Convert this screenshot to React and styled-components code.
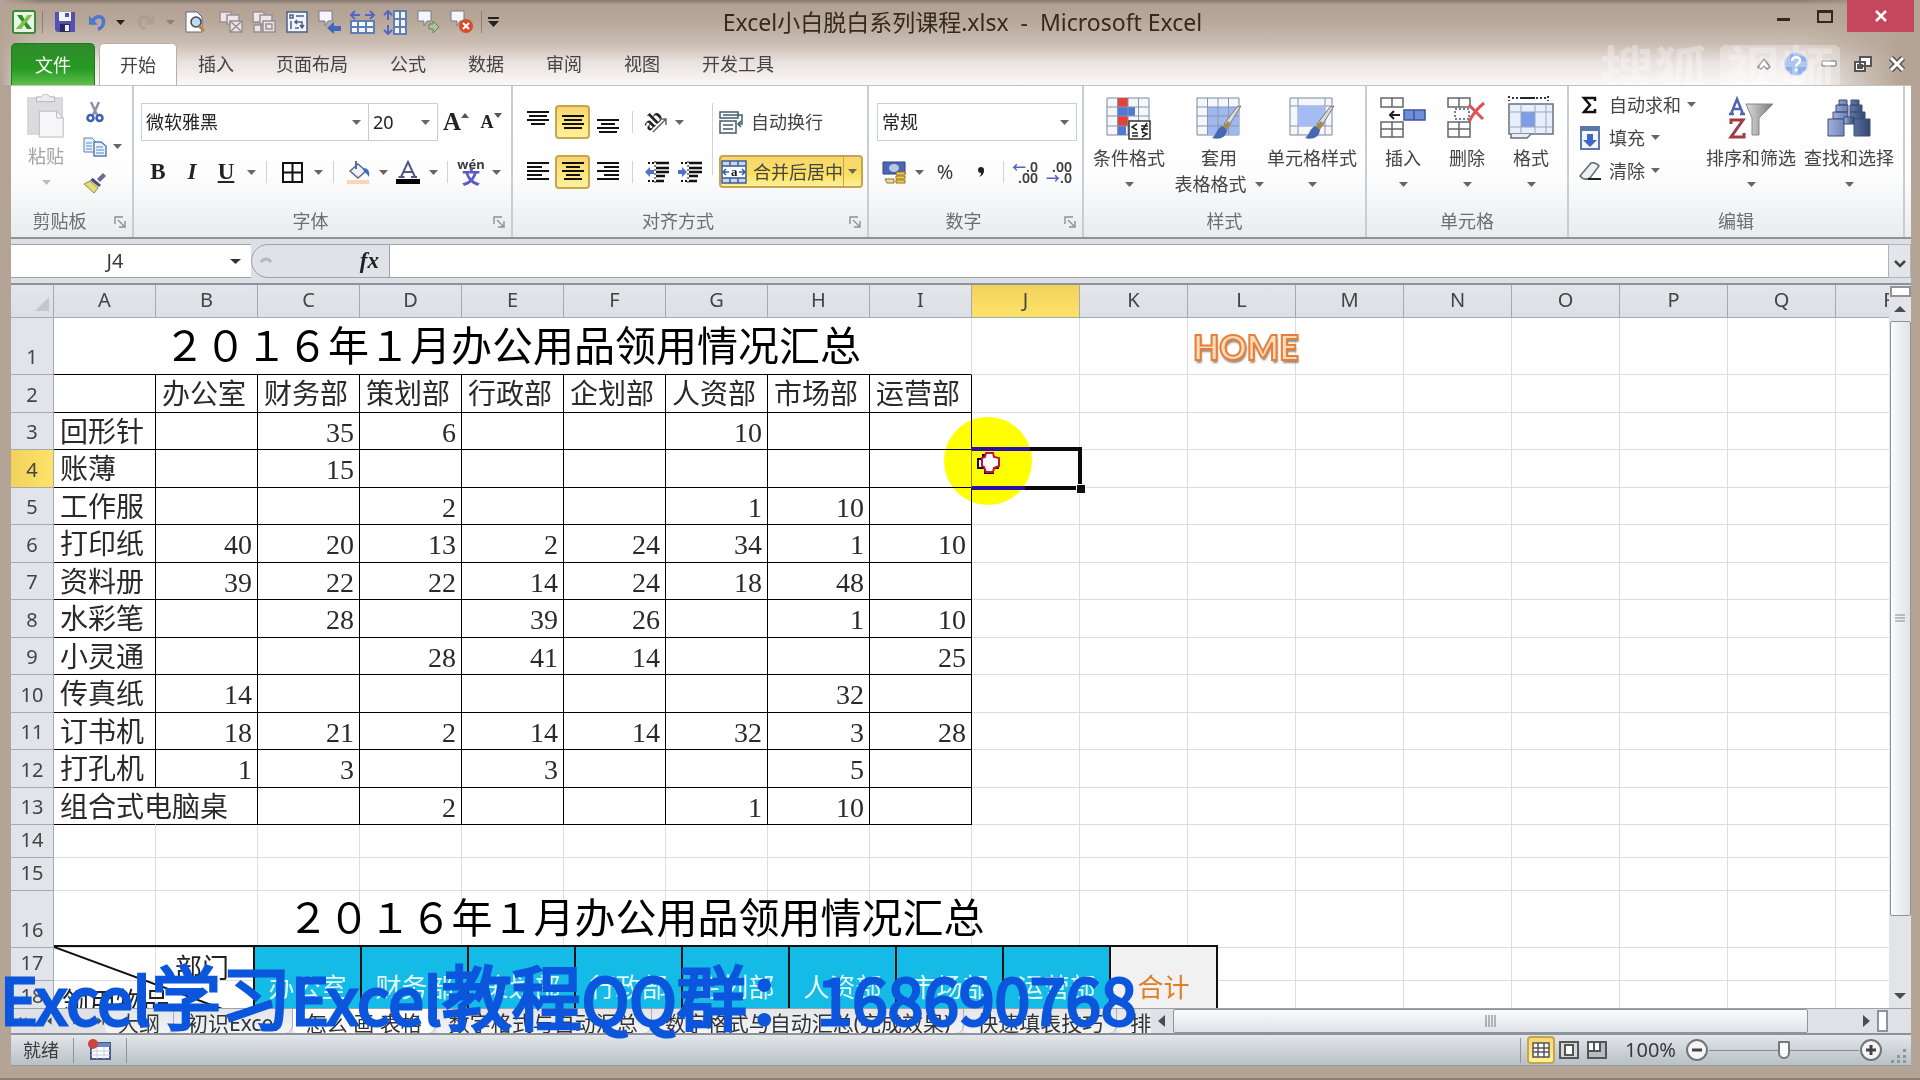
import styled, { createGlobalStyle, css } from "styled-components";

const GlobalStyle = createGlobalStyle`
  * { box-sizing: border-box; }
  body { margin: 0; overflow: hidden; }
  button, select, input { font: inherit; color: inherit; }
  button { border: 0; padding: 0; background: none; white-space: nowrap; }
`;

/* ---------- window ---------- */

const Window = styled.div`
  position: relative;
  display: flex;
  flex-direction: column;
  height: 100vh;
  padding: 0 9px 12px 11px;
  overflow: hidden;
  background: #b4a496;
  border-bottom: 2px solid #8c7e74;
  color: #3b3b3b;
  font: 18px/24px "Noto Sans", "Noto Sans CJK SC", sans-serif;
`;

const Chrome = styled.header`
  position: relative;
  margin: 0 -9px 0 -11px;
  padding: 0 6px 0 11px;
  background:
    linear-gradient(90deg, #b4a496 0, transparent 40px, transparent calc(100% - 120px), #b4a496 calc(100% - 20px)),
    linear-gradient(#86796f 0, #b2a194 5px, #b7a799 20px, #cbbdb3 44px, #e9e2de 62px, #faf8f7 85px);
`;

const TitleBar = styled.div`
  display: grid;
  grid-template-columns: 1fr auto 1fr;
  height: 43px;
`;

const QuickBar = styled.div`
  display: flex;
  align-items: center;
  height: 44px;
`;

const Tool = styled.button`
  display: flex;
  align-items: center;
  justify-content: center;
  flex: none;
  width: ${(p) => p.$w || 34}px;
  height: ${(p) => p.$h || 32}px;
  font-size: ${(p) => p.$size || 20}px;
  opacity: ${(p) => (p.$off ? 0.45 : 1)};
  svg { flex: none; }
  ${(p) =>
    p.$on &&
    css`
      border: 2px solid #c5a550;
      border-radius: 4px;
      background: linear-gradient(#f7d672, #fbe57c 50%, #fff09a);
    `}
`;

const Rule = styled.span`
  flex: none;
  width: 1px;
  height: ${(p) => p.$h || 22}px;
  margin: 0 ${(p) => p.$m || 7}px;
  background: ${(p) => p.$c || "#d0d3d8"};
`;

const Caption = styled.h1`
  margin: 0;
  padding-top: 8px;
  font-size: 23px;
  line-height: 28px;
  font-weight: 400;
  color: #33291f;
  white-space: pre;
`;

const WinButtons = styled.div`
  display: flex;
  justify-content: flex-end;
`;

const WinButton = styled.button`
  display: flex;
  align-items: center;
  justify-content: center;
  width: ${(p) => (p.$close ? 67 : 41)}px;
  height: 32px;
  margin-left: ${(p) => (p.$close ? 2 : 0)}px;
  background: ${(p) => (p.$close ? "#c5475c" : "none")};
`;

const TabRow = styled.nav`
  display: flex;
  align-items: stretch;
  height: 42px;
`;

const FileTab = styled.button`
  width: 84px;
  margin-right: 4px;
  border: 1px solid #1e7a1e;
  border-bottom: 0;
  border-radius: 5px 5px 0 0;
  background: linear-gradient(#2f8a2c, #269a22 60%, #5cc04a);
  color: #fff;
`;

const Tab = styled.button`
  padding: 0 21px;
  border-radius: 5px 5px 0 0;
  color: #444;
  ${(p) =>
    p.$on &&
    css`
      background: #fff;
      border: 1px solid #b7afa9;
      border-bottom: 0;
      padding: 0 20px;
    `}
`;

const TabTools = styled.div`
  display: flex;
  align-items: center;
  margin-left: auto;
`;

const SiteMark = styled.div`
  position: absolute;
  right: 80px;
  bottom: 0;
  height: 40px;
  display: flex;
  overflow: hidden;
  font-size: 54px;
  line-height: 52px;
  font-weight: 700;
  color: rgba(255, 255, 255, 0.3);
  span + span {
    margin-left: 12px;
    padding: 0 6px;
    border-radius: 6px 6px 0 0;
    background: rgba(255, 255, 255, 0.3);
  }
`;

/* ---------- ribbon ---------- */

const Ribbon = styled.section`
  display: flex;
  flex: none;
  height: 154px;
  padding-right: 6px;
  border-top: 1px solid #c6c1bd;
  border-bottom: 2px solid #8e9299;
  background: linear-gradient(#fff, #fdfdfd 60%, #e9ebee);
`;

const Group = styled.div`
  display: flex;
  flex-direction: column;
  flex: ${(p) => (p.$w ? "none" : "1")};
  width: ${(p) => (p.$w ? p.$w + "px" : "auto")};
  border-right: 2px solid #c9ccd1;
`;

const GroupBody = styled.div`
  display: flex;
  height: 119px;
  padding: ${(p) => p.$pad || "0"};
`;

const GroupFoot = styled.div`
  display: flex;
  align-items: center;
  height: 32px;
  color: #6b6e73;
  span { flex: 1; text-align: center; }
`;

const Launch = styled.button`
  width: 24px;
  height: 24px;
`;

const Rows = styled.div`
  display: flex;
  flex-direction: column;
  gap: ${(p) => p.$gap || 0}px;
`;

const Line = styled.div`
  display: flex;
  align-items: center;
  height: ${(p) => p.$h || 38}px;
`;

const BigButton = styled.button`
  display: flex;
  flex-direction: column;
  align-items: center;
  justify-content: flex-start;
  flex: none;
  width: ${(p) => p.$w}px;
  color: ${(p) => (p.$off ? "#a3a3a3" : "#444")};
  > svg { flex: none; height: 44px; margin-bottom: 5px; }
`;

const BigLine = styled.span`
  display: flex;
  align-items: center;
  justify-content: center;
  gap: 8px;
  height: 26px;
`;

const TextTool = styled.button`
  display: flex;
  align-items: center;
  gap: 6px;
  height: ${(p) => p.$h || 33}px;
  color: #444;
  > svg:first-child { width: 26px; }
`;

const MergeButton = styled.div`
  display: flex;
  height: 33px;
  border: 2px solid #c5a550;
  border-radius: 4px;
  background: linear-gradient(#f7d672, #fbe05f 60%, #fff09a);
  button + button {
    display: grid;
    place-items: center;
    width: 18px;
    border-left: 1px solid #c5a550;
  }
`;

const ComboBox = styled.label`
  display: grid;
  align-items: center;
  width: ${(p) => p.$w}px;
  height: 38px;
  border: 1px solid #c9ccd2;
  background: #fff;
  & + & { border-left: 0; }
  select, svg { grid-area: 1 / 1; }
  select {
    width: 100%;
    height: 36px;
    padding: 0 4px;
    border: 0;
    appearance: none;
    background: none;
    color: #222;
  }
  svg { justify-self: end; margin-right: 7px; pointer-events: none; }
`;

const Glyph = styled.span`
  font-family: "Liberation Serif", serif;
  font-size: ${(p) => p.$size || 23}px;
  font-weight: 700;
  font-style: ${(p) => (p.$italic ? "italic" : "normal")};
  text-decoration: ${(p) => (p.$under ? "underline" : "none")};
  color: ${(p) => p.$color || "#222"};
`;

const Decimals = styled.span`
  font-size: 14px;
  line-height: 11px;
  font-weight: 600;
  text-align: right;
  white-space: pre-line;
  i { color: #5560c0; font-style: normal; }
`;

/* ---------- formula bar ---------- */

const FormulaBar = styled.div`
  display: flex;
  flex: none;
  height: 46px;
  padding: 5px 0;
  border-bottom: 2px solid #8e939b;
  background: #dcdfe4;
`;

const NameBox = styled.label`
  display: flex;
  align-items: center;
  width: 240px;
  padding-right: 10px;
  background: #fff;
  border: 1px solid #9da1a8;
  border-width: 1px 0;
  input {
    width: 208px;
    margin-right: auto;
    border: 0;
    background: none;
    text-align: center;
    font-size: 20px;
    outline: none;
  }
`;

const FxArea = styled.div`
  display: flex;
  align-items: center;
  justify-content: space-between;
  width: 139px;
  padding: 0 10px 0 8px;
  border: 1px solid #9da1a8;
  border-radius: 17px 0 0 17px;
  background: #e0e2e7;
`;

const FormulaInput = styled.input`
  flex: 1;
  min-width: 0;
  border: 1px solid #9da1a8;
  border-width: 1px 0;
  outline: none;
  background: #fff;
`;

const Expand = styled.button`
  width: 23px;
  border: 1px solid #b1b5bb;
  background: #e3e5ea;
`;

/* ---------- sheet ---------- */

const SheetArea = styled.main`
  display: flex;
  flex: 1;
  min-height: 0;
`;

const Viewport = styled.div`
  position: relative;
  flex: 1;
  min-width: 0;
  overflow: hidden;
  background: #fff;
`;

const Sheet = styled.table`
  width: 1933px;
  table-layout: fixed;
  border-collapse: separate;
  border-spacing: 0;
`;

const HeadCell = styled.th`
  height: 33px;
  padding: 0 0 2px;
  border: 1px solid #a5aab2;
  border-width: 0 1px 1px 0;
  background: ${(p) => (p.$on ? "linear-gradient(#f3d25c, #fde36a)" : "linear-gradient(#e3e5ea, #dcdfe5)")};
  font-size: 20px;
  line-height: 24px;
  font-weight: 400;
  color: #444;
  svg { display: block; margin: 8px 0 0 24px; }
`;

const RowHead = styled(HeadCell)`
  height: auto;
  padding-bottom: 5px;
  vertical-align: bottom;
  background: ${(p) => (p.$on ? "linear-gradient(90deg, #f3d25c, #fde36a)" : "#e1e4e9")};
`;

const Cell = styled.td`
  padding: 3px 5px 0 6px;
  border: 0 solid #dcdde0;
  border-width: 0 1px 1px 0;
  border-right-color: ${(p) => (p.$right ? "#000" : "#dcdde0")};
  border-bottom-color: ${(p) => (p.$bottom ? "#000" : "#dcdde0")};
  ${(p) => p.$open && "border-right-color: transparent;"}
  font: 28px/28px "Liberation Serif", "Noto Sans CJK SC", serif;
  text-align: ${(p) => (p.$num ? "right" : "left")};
  color: #2a2a2a;
  white-space: nowrap;
`;

const ActiveCell = styled(Cell)`
  position: relative;
`;

const SheetTitle = styled(Cell)`
  padding: 0 0 6px;
  font: 41px/48px "Noto Sans CJK SC", sans-serif;
  text-align: center;
  color: #000;
`;

const Selection = styled.div`
  position: absolute;
  inset: -3px -3px -3px -1px;
  border: 4px solid #0a0a0a;
  border-left: 1px solid #8c7fd8;
`;

const Handle = styled.span`
  position: absolute;
  right: -7px;
  bottom: -7px;
  width: 10px;
  height: 10px;
  border: 1px solid #fff;
  background: #111;
`;

const Spot = styled.svg`
  position: absolute;
  left: -28px;
  top: -33px;
  mix-blend-mode: multiply;
`;

const Pointer = styled.svg`
  position: absolute;
  left: -1px;
  top: -3px;
`;

const WordArt = styled.div`
  position: absolute;
  left: 1182px;
  top: 42px;
  font: 900 34px/40px Lato, sans-serif;
  color: #fbdcb8;
  -webkit-text-stroke: 2px #e5803c;
  text-shadow: 1px 3px 2px rgba(90, 60, 40, 0.6);
`;

const Linked = styled.div`
  position: absolute;
  left: 43px;
  top: 606px;
  display: grid;
  grid-template-columns: 201px repeat(9, 107px);
  grid-template-rows: 56px 78px;
`;

const LinkedTitle = styled.div`
  grid-column: 1 / -1;
  border-bottom: 2px solid #111;
  font: 41px/48px "Noto Sans CJK SC", sans-serif;
  text-align: center;
  color: #000;
`;

const Corner = styled.div`
  position: relative;
  border-right: 2px solid #111;
  font: 27px/28px "Noto Sans CJK SC", sans-serif;
  color: #222;
  svg { position: absolute; inset: 0; }
`;

const CornerTop = styled.div`
  padding: 6px 24px 0 0;
  text-align: right;
`;

const CornerSide = styled.div`
  padding: 6px 0 0 8px;
`;

const LinkedCell = styled.div`
  display: flex;
  align-items: center;
  justify-content: center;
  border-right: 2px solid #111;
  background: ${(p) => (p.$total ? "#f1f1f2" : "#14bbe6")};
  color: ${(p) => (p.$total ? "#e07c22" : "#e4f8fd")};
  font: 26px/32px "Noto Sans CJK SC", sans-serif;
`;

const VScroll = styled.div`
  display: flex;
  flex-direction: column;
  align-items: center;
  width: 22px;
  padding-top: 1px;
  background: #e2e4e9;
`;

const SplitBox = styled.span`
  width: ${(p) => (p.$side ? 11 : 21)}px;
  height: ${(p) => (p.$side ? 22 : 11)}px;
  border: 2px solid #8f949c;
  background: #fff;
`;

const ArrowButton = styled.button`
  display: flex;
  align-items: center;
  justify-content: center;
  flex: none;
  width: 22px;
  height: 24px;
`;

const DownButton = styled(ArrowButton)`
  margin-top: auto;
`;

const RightButton = styled(ArrowButton)`
  margin-left: auto;
`;

const Thumb = styled.div`
  display: flex;
  align-items: center;
  justify-content: center;
  border: 1px solid #8f949c;
  border-radius: 2px;
  background: linear-gradient(${(p) => (p.$side ? "180deg" : "90deg")}, #fafbfc, #dfe2e7);
  ${(p) => (p.$side ? "flex: 0 1 635px; height: 24px;" : "width: 21px; flex: 0 1 595px;")}
`;

const BottomRow = styled.div`
  display: flex;
  align-items: center;
  flex: none;
  height: 25px;
  overflow: hidden;
  border-top: 1px solid #9da1a8;
  background: #dfe1e6;
`;

const SheetTabs = styled.div`
  display: flex;
  flex: 0 0 1140px;
  overflow: hidden;
  height: 24px;
`;

const NavButtons = styled.div`
  display: flex;
  align-items: center;
  flex: none;
  gap: 17px;
  width: 94px;
  padding-left: 8px;
`;

const SheetTab = styled.button`
  flex: none;
  height: 24px;
  padding: 0 13px;
  border-right: 1px solid #a9adb4;
  border-radius: 0 0 8px 4px;
  background: ${(p) => (p.$on ? "#fff" : "linear-gradient(#e3e5e9, #f3f4f6)")};
  font-size: 21px;
  line-height: 28px;
  color: #333;
  white-space: pre;
`;

const StatusBar = styled.footer`
  display: flex;
  align-items: center;
  flex: none;
  height: 33px;
  padding: 0 2px 0 12px;
  border-top: 2px solid #8e939b;
  border-bottom: 1px solid #93989f;
  background: linear-gradient(#e4e7ea, #c9cfd4 60%, #b9c2c7);
`;

const Zoom = styled.div`
  display: flex;
  align-items: center;
  margin-left: auto;
  label { width: 48px; margin: 0 12px 0 14px; font-size: 20px; }
  input {
    width: 150px;
    height: 24px;
    margin: 0;
    appearance: none;
    background: linear-gradient(#858a90, #858a90) center / 100% 1px no-repeat;
  }
  input::-webkit-slider-thumb {
    appearance: none;
    width: 12px;
    height: 18px;
    border: 2px solid #74797f;
    border-radius: 1px 1px 6px 6px;
    background: #f8f9fa;
  }
`;

const Banner = styled.div`
  position: absolute;
  left: 0;
  bottom: 36px;
  display: flex;
  align-items: baseline;
  font: 64px/90px "Noto Sans CJK SC", sans-serif;
  color: #0b56dc;
  -webkit-text-stroke: 3px #0b56dc;
  white-space: pre;
  b { font-weight: 400; font-size: 70px; }
`;

/* ---------- drawings ---------- */

const Down = ({ c = "#666", w = 9 }) => (
  <svg width={w} height="5" viewBox="0 0 10 5" preserveAspectRatio="none"><path d="M0 0h10L5 5z" fill={c} /></svg>
);

const Drop = ({ w = 16, label, c }) => (
  <Tool $w={w} aria-label={label}><Down c={c} /></Tool>
);

const Corner45 = () => (
  <svg width="12" height="12" viewBox="0 0 12 12" fill="none" stroke="#8b8f96" strokeWidth="1.4">
    <path d="M1 8V1h8M4 4l6 6M11 5v6H5" />
  </svg>
);

const Lines = ({ rows, h = 22 }) => (
  <svg width="22" height={h} viewBox={`0 0 22 ${h}`} stroke="#111" strokeWidth="2">
    {rows.map(([x1, x2, y]) => <path key={y} d={`M${x1} ${y}H${x2}`} />)}
  </svg>
);

const ExcelLogo = () => (
  <svg width="24" height="24" viewBox="0 0 24 24">
    <rect x="1" y="1" width="22" height="22" rx="2" fill="#e9f5e4" stroke="#3d8b37" strokeWidth="2" />
    <path d="M5 5h5l2.500 4.500L16 5h4l-5.500 7L20 19h-5l-3-4.500L9 19H4l6-7z" fill="#2f8a2c" />
    <path d="M16 5h4L9 19H4z" fill="#7fc04b" />
  </svg>
);

const SaveIcon = () => (
  <svg width="22" height="22" viewBox="0 0 22 22">
    <path d="M1 1h20v20H3l-2-2z" fill="#5450b4" />
    <path d="M5 1h12v9H5z" fill="#f4f4fb" /><path d="M11 2h4v4h-4z" fill="#5450b4" />
    <path d="M6 13h10v8H6z" fill="#2c2a5e" /><path d="M11 14h4v6h-4z" fill="#eee" />
  </svg>
);

const UndoIcon = ({ flip }) => (
  <svg width="20" height="20" viewBox="0 0 22 20">
    <g transform={flip ? "translate(22 0) scale(-1 1)" : undefined}>
      <path d="M5 9C9 2 18 3 17 10c0 4-3 7-6 8" fill="none" stroke={flip ? "#a0948c" : "#4f77c9"} strokeWidth="4" />
      <path d="M1 3v10h10z" fill={flip ? "#a0948c" : "#4f77c9"} />
    </g>
  </svg>
);

const PreviewIcon = () => (
  <svg width="22" height="22" viewBox="0 0 22 22">
    <path d="M2 1h11l5 5v15H2z" fill="#fff" stroke="#667" />
    <circle cx="12" cy="11" r="5" fill="#b9dcea" stroke="#445" strokeWidth="1.500" />
    <path d="M15 15l5 5" stroke="#b4863b" strokeWidth="3" />
  </svg>
);

const ShapesIcon = ({ group }) => (
  <svg width="24" height="24" viewBox="0 0 24 24" fill="#ece6e8" stroke="#998e94" strokeWidth="1.500">
    <path d="M1 2h11v10H1z" /><path d="M8 5h12v9H8z" />
    <path d="M11 11h12v11H11z" />
    {group ? <path d="M2 15h7v7H2zM14 14h6v5h-6z" /> : <path d="M11 11l12 11M23 11L11 22" />}
  </svg>
);

const FormIcon = () => (
  <svg width="22" height="22" viewBox="0 0 22 22" fill="none" stroke="#4a6186" strokeWidth="1.500">
    <path d="M1 1h20v20H1z" fill="#f3f7fc" /><path d="M4 4h3v3H4zM10 5h8M5 10v8M11 9l-2 2 2 2M9 11h7v5M14 14l2 3 2-3M9 17h4" />
  </svg>
);

const BubbleIcon = ({ mark }) => (
  <svg width="25" height="24" viewBox="0 0 25 24">
    <path d="M2 1h13v10h-4l-3 5v-5H2z" fill="#f5f6fb" stroke="#777b8c" />
    {mark === "left" && <path d="M10 18l7-6v4h7v5h-7v3z" fill="#4266bb" />}
    {mark === "right" && <path d="M23 17l-6-6v3h-4v5h4v4z" fill="#a8c49a" stroke="#67805c" />}
    {mark === "del" && <><circle cx="17" cy="16" r="7" fill="#d94a2b" /><path d="M14 13l6 6M20 13l-6 6" stroke="#fff" strokeWidth="2" /></>}
  </svg>
);

const WidthIcon = ({ turn }) => (
  <svg width="25" height="25" viewBox="0 0 25 25">
    <g transform={turn ? "rotate(-90 12.5 12.5)" : undefined}>
      <path d="M2 5h8M15 5h8" stroke="#5366c3" strokeWidth="2" />
      <path d="M5 1L1 5l4 4M20 1l4 4-4 4" fill="none" stroke="#5366c3" strokeWidth="2" />
      <path d="M1 11h23v12H1z" fill="#f2f6fc" stroke="#5f7fb4" strokeWidth="2" />
      <path d="M1 17h23M8 11v12M16 11v12" stroke="#5f7fb4" strokeWidth="2" />
    </g>
  </svg>
);

const PasteIcon = () => (
  <svg width="42" height="46" viewBox="0 0 42 46">
    <path d="M2 4h36v38H2z" fill="#dcdcde" stroke="#c9c9cd" /><path d="M11 8V3h5l3-3h3l3 3h5v5z" fill="#ededef" stroke="#b4b4b9" />
    <path d="M14 18h18l7 7v20H14z" fill="#f6f6f8" stroke="#b9b9bf" /><path d="M32 18v7h7" fill="none" stroke="#b9b9bf" />
  </svg>
);

const CutIcon = () => (
  <svg width="18" height="22" viewBox="0 0 18 22" fill="none">
    <path d="M5 1l6 13M13 1L7 14" stroke="#8a93a8" strokeWidth="2.500" />
    <circle cx="4.500" cy="17" r="3" stroke="#3b5fb5" strokeWidth="2.500" /><circle cx="13.500" cy="17" r="3" stroke="#3b5fb5" strokeWidth="2.500" />
  </svg>
);

const CopyIcon = () => (
  <svg width="24" height="20" viewBox="0 0 24 20" fill="#eaf2fb" stroke="#5a7fae">
    <path d="M1 1h8l4 4v10H1z" /><path d="M11 5h7l5 4v10H11z" strokeWidth="1.500" /><path d="M3 6h6M3 9h6M3 12h6M13 10h7M13 13h8M13 16h8" stroke="#4f8cc9" />
  </svg>
);

const BrushIcon = () => (
  <svg width="24" height="22" viewBox="0 0 24 22">
    <path d="M14 7l6-6 3 3-6 6z" fill="#6f6699" /><path d="M10 6l8 7-2 2-9-7z" fill="#4f4c6c" />
    <path d="M7 9l8 7-4 5L1 12z" fill="#e4dc7a" stroke="#8d8a45" />
  </svg>
);

const BordersIcon = () => (
  <svg width="21" height="21" viewBox="0 0 21 21" fill="none" stroke="#111" strokeWidth="2"><path d="M1 1h19v19H1zM10.500 1v19M1 10.500h19" /></svg>
);

const FillIcon = () => (
  <svg width="25" height="24" viewBox="0 0 25 24">
    <path d="M4 11l8-7 8 7-8 7z" fill="#eef1f7" stroke="#5a6b90" strokeWidth="1.500" /><path d="M10 1v8" stroke="#5a6b90" strokeWidth="2" />
    <path d="M17 8c5 0 7 3 6 9-2-3-3-4-5-5z" fill="#3e6ec4" /><path d="M1 20h22v4H1z" fill="#fbd5b5" />
  </svg>
);

const FontColorIcon = () => (
  <svg width="24" height="24" viewBox="0 0 24 24">
    <path d="M5 17L12 2l7 15M8 12h8M2.500 17h6M15 17h6" fill="none" stroke="#4f5683" strokeWidth="2" /><path d="M0 19h24v5H0z" fill="#000" />
  </svg>
);

const Wen = styled.span`
  display: flex;
  flex-direction: column;
  align-items: center;
  font-size: 13px;
  line-height: 10px;
  font-weight: 700;
  b { font-size: 18px; line-height: 16px; color: #5b5bc4; }
`;

const OrientIcon = () => (
  <svg width="24" height="24" viewBox="0 0 24 24">
    <text x="1" y="17" transform="rotate(-45 9 14)" fontFamily="Liberation Serif" fontWeight="700" fontSize="19" fill="#222">ab</text>
    <path d="M9 22L22 9M16 9h6v6" fill="none" stroke="#666" strokeWidth="1.500" />
  </svg>
);

const IndentIcon = ({ out }) => (
  <svg width="24" height="22" viewBox="0 0 24 22">
    <path d="M3 2h8M3 20h8" stroke="#111" strokeWidth="2" strokeDasharray="2 2" />
    <path d="M11 2h13M11 7h13M11 11h13M11 15h9M11 20h8" stroke="#111" strokeWidth="2.500" /><path d="M10 0v22" stroke="#111" strokeDasharray="2 2" />
    {out ? <path d="M0 11l5-5v3h4v4H5v3z" fill="#5470c5" /> : <path d="M9 11L4 6v3H0v4h4v3z" fill="#5470c5" />}
  </svg>
);

const WrapIcon = () => (
  <svg width="26" height="23" viewBox="0 0 26 23" fill="none" stroke="#445b70" strokeWidth="1.500">
    <path d="M1 1h18v6H1zM1 10h16v12H1zM4 14h10M4 18h10M4 4h19v9h-4" /><path d="M22 10l-3 3 3 3" />
  </svg>
);

const MergeIcon = () => (
  <svg width="26" height="24" viewBox="0 0 26 24">
    <path d="M1 1h24v22H1z" fill="#c8d6f0" stroke="#3f5e9b" strokeWidth="1.500" />
    <path d="M1 6h24M1 18h24M9 1v5M17 1v5M9 18v5M17 18v5" stroke="#3f5e9b" strokeWidth="1.500" />
    <path d="M2 7h22v10H2z" fill="#fff" /><path d="M2 12h6M18 12h6M5 9L2 12l3 3M21 9l3 3-3 3" fill="none" stroke="#345bb5" strokeWidth="1.500" />
    <text x="10" y="16" fontFamily="Liberation Serif" fontWeight="700" fontSize="13" fill="#111">a</text>
  </svg>
);

const MoneyIcon = () => (
  <svg width="25" height="25" viewBox="0 0 25 25">
    <path d="M1 2h22v12H1z" fill="#4a66b5" stroke="#30457f" /><ellipse cx="12" cy="8" rx="5" ry="4" fill="#b9c8ea" />
    <path d="M14 12h9v3h-9zM14 16h9v3h-9zM14 20h9v3h-9z" fill="#f0cf4f" stroke="#96711c" /><path d="M3 19h9v4H5z" fill="#e9dfa5" stroke="#96711c" />
  </svg>
);

const CommaIcon = () => (
  <svg width="8" height="12" viewBox="0 0 8 12"><circle cx="4" cy="4" r="3" fill="#222" /><path d="M7 4c0 4-2 6-5 7 2-2 2-3 2-5z" fill="#222" /></svg>
);

const Grid4 = ({ children, fill }) => (
  <svg width="46" height="44" viewBox="0 0 46 44">
    <path d="M1 2h42v37H1z" fill="#f4f8fd" stroke="#7c8796" />
    {fill}
    <path d="M11.500 2v37M22 2v37M32.500 2v37M1 11h42M1 20h42M1 30h42" stroke="#8a95a8" />
    {children}
  </svg>
);

const Brush = () => (
  <>
    <path d="M45 10L32 31l-4-3 13-17z" fill="#d9dadd" stroke="#777" /><path d="M32 25l-6 6 4 4 5-7z" fill="#a38b4e" />
    <path d="M26 30c-5 2-5 8-10 12 7 2 14 0 15-8z" fill="#4767b4" />
  </>
);

const CondIcon = () => (
  <Grid4 fill={<><path d="M11 2h11v9H11zM11 20h11v10H11z" fill="#e2423d" /><path d="M11 11h18v9H11zM11 30h9v9h-9z" fill="#5079d6" /></>}>
    <path d="M23 25h21v18H23z" fill="#fff" stroke="#333" strokeWidth="1.500" />
    <path d="M31 28l-5 3 5 3M26 37h6M26 40h6M35 30h7M35 33h7M41 27l-5 8M36 36l5 2-5 3" fill="none" stroke="#222" strokeWidth="1.500" />
  </Grid4>
);

const TableIcon = () => <Grid4 fill={<path d="M11 11h32v28H11z" fill="#9fb8ef" />}><Brush /></Grid4>;

const StyleIcon = () => (
  <svg width="46" height="44" viewBox="0 0 46 44">
    <path d="M1 2h42v37H1z" fill="#f4f8fd" stroke="#7c8796" /><path d="M9 2v37M36 2v37M1 10h42M1 30h42" stroke="#8a95a8" />
    <path d="M9 10h27v20H9z" fill="#a4bbf3" /><Brush />
  </svg>
);

const InsertIcon = () => (
  <svg width="46" height="42" viewBox="0 0 46 42" fill="#fff" stroke="#666" strokeWidth="1.500">
    <path d="M1 1h22v9H1zM12 1v9M1 25h22v15H1zM12 25v15M1 32h22" /><path d="M24 13h21v10H24z" fill="#6f8fdc" stroke="#3d549b" /><path d="M34 13v10" stroke="#3d549b" />
    <path d="M20 18H10M14 14l-4 4 4 4" fill="none" stroke="#222" strokeWidth="2" />
  </svg>
);

const DeleteIcon = () => (
  <svg width="40" height="42" viewBox="0 0 40 42" fill="#fff" stroke="#666" strokeWidth="1.500">
    <path d="M1 1h22v9H1zM12 1v9M1 25h22v15H1zM12 25v15M1 32h22" /><path d="M8 12h14v10H8z" strokeDasharray="2 2" stroke="#3d549b" />
    <path d="M22 8c5 5 9 9 14 14M37 6C31 11 25 18 22 25" fill="none" stroke="#e05252" strokeWidth="3" />
  </svg>
);

const FormatIcon = () => (
  <svg width="47" height="44" viewBox="0 0 47 44">
    <path d="M1 0v5M40 0v5M4 2h34" stroke="#334" strokeWidth="2" strokeDasharray="2 2" /><path d="M13 2h14" stroke="#223" strokeWidth="2" />
    <path d="M1 8h44v30H1z" fill="#e6effb" stroke="#66727f" strokeWidth="1.500" /><path d="M3 38v4h16l4-4" fill="#eee" stroke="#66727f" strokeWidth="1.500" />
    <path d="M13 16h14v15H13z" fill="#7f9ce6" /><path d="M13 8v30M27 8v30M38 8v30M1 16h44M1 31h44" stroke="#9aa8bb" />
  </svg>
);

const SortIcon = () => (
  <svg width="46" height="44" viewBox="0 0 46 44">
    <defs><linearGradient id="funnel"><stop stopColor="#ddd" /><stop offset="1" stopColor="#777" /></linearGradient></defs>
    <path d="M3 18L9 3l6 15M5 13h8M1 18h5M12 18h5" fill="none" stroke="#4e64b4" strokeWidth="2.500" />
    <path d="M3 28v-4h12L3 41h13v-4" fill="none" stroke="#a53a46" strokeWidth="3" />
    <path d="M18 8h27L31 22v17h-7V22z" fill="url(#funnel)" stroke="#888" />
  </svg>
);

const FindIcon = () => (
  <svg width="44" height="42" viewBox="0 0 44 42">
    <defs><linearGradient id="lens"><stop stopColor="#9fb1d6" /><stop offset=".4" stopColor="#6f86b8" /><stop offset="1" stopColor="#33466f" /></linearGradient></defs>
    <g fill="url(#lens)" stroke="#3e4f78">
      <path d="M12 3h8v5h-8zM24 3h8v5h-8zM9 8h12v7H9zM23 8h12v7H23zM6 15h15v7H6zM23 15h15v7H23z" />
      <path d="M1 22h16v17H1zM27 22h16v17H27z" /><path d="M17 20h10v7H17z" />
    </g>
  </svg>
);

const SumIcon = () => (
  <svg width="18" height="18" viewBox="0 0 18 18"><path d="M14 5V2H3l6 7-6 7h11v-3" fill="none" stroke="#111" strokeWidth="2.500" /></svg>
);

const FillDownIcon = () => (
  <svg width="22" height="24" viewBox="0 0 22 24">
    <path d="M2 1h18v22H2z" fill="#f3f7fd" stroke="#5a78ab" strokeWidth="2" /><path d="M2 1h18v4H2z" fill="#5a78ab" /><path d="M8 8h6v6h4l-7 7-7-7h4z" fill="#3f66c8" />
  </svg>
);

const EraserIcon = () => (
  <svg width="22" height="20" viewBox="0 0 22 20"><path d="M1 15L12 2q5-1 8 3L11 17q-6 3-10-2z" fill="#eef0f4" stroke="#667" strokeWidth="1.500" /><path d="M9 18h13" stroke="#222" strokeWidth="2" /></svg>
);

const HelpIcon = () => (
  <svg width="24" height="24" viewBox="0 0 24 24">
    <circle cx="12" cy="12" r="11.500" fill="#5c8be0" stroke="#b7c9ee" /><path d="M8 9c0-5 8-5 8-.5 0 3-4 3-4 6" fill="none" stroke="#fff" strokeWidth="2.500" /><circle cx="12" cy="18" r="1.600" fill="#fff" />
  </svg>
);

const MacroIcon = () => (
  <svg width="24" height="22" viewBox="0 0 24 22">
    <path d="M3 4h19v16H3z" fill="#fff" stroke="#46598a" strokeWidth="2" /><path d="M3 4h19v4H3z" fill="#6d86c0" /><path d="M3 12h19M3 16h19M9 8v12M16 8v12" stroke="#c5cbe0" /><circle cx="5" cy="5" r="5" fill="#c9473d" />
  </svg>
);

const Tri = ({ d, w = 12, h = 12 }) => <svg width={w} height={h} viewBox="0 0 12 12"><path d={d} fill="#4a4d52" /></svg>;

/* ---------- data ---------- */

const columns = "ABCDEFGHIJKLMNOPQR".split("");
const departments = ["", "办公室", "财务部", "策划部", "行政部", "企划部", "人资部", "市场部", "运营部"];
const sheetRows = [
  departments,
  ["回形针", "", 35, 6, "", "", 10, "", ""],
  ["账薄", "", 15, "", "", "", "", "", ""],
  ["工作服", "", "", 2, "", "", 1, 10, ""],
  ["打印纸", 40, 20, 13, 2, 24, 34, 1, 10],
  ["资料册", 39, 22, 22, 14, 24, 18, 48, ""],
  ["水彩笔", "", 28, "", 39, 26, "", 1, 10],
  ["小灵通", "", "", 28, 41, 14, "", "", 25],
  ["传真纸", 14, "", "", "", "", "", 32, ""],
  ["订书机", 18, 21, 2, 14, 14, 32, 3, 28],
  ["打孔机", 1, 3, "", 3, "", "", 5, ""],
  ["组合式电脑桌", "", "", 2, "", "", 1, 10, ""],
];
const sheetTabs = ["大纲", "初识Excel", "怎么 画 表格", "数字格式与自动汇总", "数字格式与自动汇总(完成效果)", "快速填表技巧", "排序"];
const title = "２０１６年１月办公用品领用情况汇总";

const Row = styled.tr`
  height: ${(p) => p.$h}px;
`;

const blanks = (from) => columns.slice(from).map((c) => <Cell key={c} />);

function Worksheet() {
  return (
    <Viewport>
      <Sheet>
        <colgroup>
          <col width="43" />
          {columns.map((c, i) => <col key={c} width={i < 9 ? 102 : 108} />)}
        </colgroup>
        <thead>
          <tr>
            <HeadCell><svg width="14" height="14"><path d="M14 0v14H0z" fill="#c3c7cd" /></svg></HeadCell>
            {columns.map((c) => <HeadCell key={c} $on={c === "J"}>{c}</HeadCell>)}
          </tr>
        </thead>
        <tbody>
          <Row $h={57}>
            <RowHead>1</RowHead>
            <SheetTitle colSpan={9} $bottom>{title}</SheetTitle>
            {blanks(9)}
          </Row>
          {sheetRows.map((row, r) => (
            <Row key={r} $h={r % 2 ? 37 : 38}>
              <RowHead $on={r === 2}>{r + 2}</RowHead>
              {row.map((v, c) => (
                <Cell key={c} $num={typeof v === "number"} $bottom $right={!(r === 11 && c === 0)} $open={r === 11 && c === 0}>{v}</Cell>
              ))}
              {r === 2 ? (
                <ActiveCell>
                  <Selection />
                  <Spot width="88" height="88"><circle cx="44" cy="44" r="44" fill="#ff0" /></Spot>
                  <Pointer width="64" height="46" viewBox="0 0 64 46">
                    <path d="M1 2h58M1 41h53" stroke="#2a10a8" strokeWidth="4" />
                    <path d="M12 8h10v4h5v9h-5v5h-8v-5H7v-9h5z" fill="#fff" stroke="#111" strokeWidth="2" />
                    <path d="M15 6h7l1 4 5 1v8l-5 2-1 4h-7l-2-5-2-1v-8l3-1z" fill="#fff" stroke="#c8103c" strokeWidth="2" />
                  </Pointer>
                  <Handle />
                </ActiveCell>
              ) : <Cell />}
              {blanks(10)}
            </Row>
          ))}
          <Row $h={33}><RowHead>14</RowHead>{blanks(0)}</Row>
          <Row $h={33}><RowHead>15</RowHead>{blanks(0)}</Row>
          <Row $h={57}><RowHead>16</RowHead>{blanks(0)}</Row>
          <Row $h={33}><RowHead>17</RowHead>{blanks(0)}</Row>
          <Row $h={33}><RowHead>18</RowHead>{blanks(0)}</Row>
        </tbody>
      </Sheet>
      <WordArt>HOME</WordArt>
      <Linked>
        <LinkedTitle>{title}</LinkedTitle>
        <Corner>
          <svg width="201" height="78"><path d="M0 0l201 74" stroke="#111" strokeWidth="2" /></svg>
          <CornerTop>部门</CornerTop>
          <CornerSide>领用物品</CornerSide>
        </Corner>
        {departments.slice(1).map((d) => <LinkedCell key={d}>{d}</LinkedCell>)}
        <LinkedCell $total>合计</LinkedCell>
      </Linked>
    </Viewport>
  );
}

const Foot = ({ children, launch }) => (
  <GroupFoot>
    <span>{children}</span>
    {launch && <Launch aria-label={children}><Corner45 /></Launch>}
  </GroupFoot>
);

const Big = ({ w, icon, text, second, off }) => (
  <BigButton $w={w} $off={off}>
    {icon}
    <BigLine>{text}</BigLine>
    <BigLine>{second}<Down c={off ? "#bbb" : "#666"} /></BigLine>
  </BigButton>
);

const Combo = ({ w, label, value }) => (
  <ComboBox $w={w}>
    <select aria-label={label} defaultValue={value}><option>{value}</option></select>
    <Down />
  </ComboBox>
);

function RibbonBar() {
  return (
    <Ribbon>
      <Group $w={123}>
        <GroupBody $pad="8px 0 0">
          <Big w={70} icon={<PasteIcon />} text="粘贴" off />
          <Rows>
            <Line $h={35}><Tool $w={28}><CutIcon /></Tool></Line>
            <Line $h={35}><Tool $w={28}><CopyIcon /></Tool><Drop label="复制" /></Line>
            <Line $h={38}><Tool $w={28}><BrushIcon /></Tool></Line>
          </Rows>
        </GroupBody>
        <Foot launch>剪贴板</Foot>
      </Group>

      <Group $w={379}>
        <GroupBody $pad="17px 0 0 7px">
          <Rows $gap={12}>
            <Line>
              <Combo w={228} label="字体" value="微软雅黑" />
              <Combo w={69} label="字号" value="20" />
              <Tool $w={36}><Glyph $size={25}>A</Glyph><svg width="8" height="18"><path d="M0 5h8L4 0z" fill="#555" /></svg></Tool>
              <Tool $w={34}><Glyph $size={18}>A</Glyph><svg width="8" height="18"><path d="M0 0h8L4 5z" fill="#555" /></svg></Tool>
            </Line>
            <Line>
              <Tool><Glyph>B</Glyph></Tool>
              <Tool><Glyph $italic>I</Glyph></Tool>
              <Tool><Glyph $under>U</Glyph></Tool>
              <Drop label="下划线" />
              <Rule />
              <Tool $w={36}><BordersIcon /></Tool><Drop label="边框" />
              <Rule />
              <Tool><FillIcon /></Tool><Drop label="填充颜色" />
              <Tool><FontColorIcon /></Tool><Drop label="字体颜色" />
              <Rule $m={6} />
              <Tool><Wen>wén<b>文</b></Wen></Tool><Drop label="拼音" />
            </Line>
          </Rows>
        </GroupBody>
        <Foot launch>字体</Foot>
      </Group>

      <Group $w={356}>
        <GroupBody $pad="17px 0 0 7px">
          <Rows $gap={12}>
            <Line>
              <Tool $w={35}><Lines rows={[[0, 22, 1], [2, 20, 5], [0, 22, 9], [4, 18, 13]]} /></Tool>
              <Tool $w={35} $h={34} $on><Lines rows={[[0, 22, 5], [2, 20, 9], [0, 22, 13], [2, 20, 17]]} /></Tool>
              <Tool $w={35}><Lines rows={[[0, 22, 9], [4, 18, 13], [0, 22, 17], [2, 20, 21]]} /></Tool>
              <Rule />
              <Tool $w={32}><OrientIcon /></Tool><Drop w={14} label="方向" />
            </Line>
            <Line>
              <Tool $w={35}><Lines rows={[[0, 22, 2], [0, 15, 6], [0, 22, 10], [0, 15, 14], [0, 22, 18]]} /></Tool>
              <Tool $w={35} $h={34} $on><Lines rows={[[0, 22, 2], [4, 18, 6], [0, 22, 10], [4, 18, 14], [2, 20, 18]]} /></Tool>
              <Tool $w={35}><Lines rows={[[0, 22, 2], [7, 22, 6], [0, 22, 10], [7, 22, 14], [0, 22, 18]]} /></Tool>
              <Rule />
              <Tool $w={33}><IndentIcon out /></Tool><Tool $w={33}><IndentIcon /></Tool>
            </Line>
          </Rows>
          <Rule $h={72} $m={6} />
          <Rows $gap={14}>
            <TextTool $h={38}><WrapIcon />自动换行</TextTool>
            <MergeButton>
              <TextTool $h={29}><MergeIcon />合并后居中</TextTool>
              <button aria-label="合并选项"><Down /></button>
            </MergeButton>
          </Rows>
        </GroupBody>
        <Foot launch>对齐方式</Foot>
      </Group>

      <Group $w={215}>
        <GroupBody $pad="17px 0 0 8px">
          <Rows $gap={12}>
            <Line><Combo w={200} label="数字格式" value="常规" /></Line>
            <Line>
              <Tool><MoneyIcon /></Tool><Drop label="会计数字格式" />
              <Tool $w={36}>%</Tool>
              <Tool $w={36} aria-label="千位分隔"><CommaIcon /></Tool>
              <Rule $m={4} />
              <Tool $w={34}><Decimals><i>←</i>.0{"\n"}.00</Decimals></Tool>
              <Tool $w={34}><Decimals>.00{"\n"}<i>→</i>.0</Decimals></Tool>
            </Line>
          </Rows>
        </GroupBody>
        <Foot launch>数字</Foot>
      </Group>

      <Group $w={283}>
        <GroupBody $pad="10px 0 0">
          <Big w={90} icon={<CondIcon />} text="条件格式" />
          <Big w={90} icon={<TableIcon />} text="套用" second="表格格式" />
          <Big w={96} icon={<StyleIcon />} text="单元格样式" />
        </GroupBody>
        <Foot>样式</Foot>
      </Group>

      <Group $w={202}>
        <GroupBody $pad="10px 0 0 4px">
          <Big w={64} icon={<InsertIcon />} text="插入" />
          <Big w={64} icon={<DeleteIcon />} text="删除" />
          <Big w={64} icon={<FormatIcon />} text="格式" />
        </GroupBody>
        <Foot>单元格</Foot>
      </Group>

      <Group>
        <GroupBody $pad="2px 0 0 8px">
          <Rows>
            <TextTool><SumIcon />自动求和 <Down /></TextTool>
            <TextTool><FillDownIcon />填充 <Down /></TextTool>
            <TextTool><EraserIcon />清除 <Down /></TextTool>
          </Rows>
          <GroupBody $pad="8px 0 0 6px">
            <Big w={98} icon={<SortIcon />} text="排序和筛选" />
            <Big w={98} icon={<FindIcon />} text="查找和选择" />
          </GroupBody>
        </GroupBody>
        <Foot>编辑</Foot>
      </Group>
    </Ribbon>
  );
}

export default function App() {
  return (
    <>
      <GlobalStyle />
      <Window>
        <Chrome>
          <TitleBar>
            <QuickBar>
              <Tool $w={26}><ExcelLogo /></Tool>
              <Rule $c="#8d8077" $m={5} />
              <Tool><SaveIcon /></Tool>
              <Tool $w={32}><UndoIcon /></Tool><Drop w={12} label="撤消" c="#222" />
              <Tool $off $w={38}><UndoIcon flip /></Tool><Drop w={12} label="恢复" c="#8d8077" />
              <Tool $w={38}><PreviewIcon /></Tool>
              <Tool $w={33}><ShapesIcon /></Tool>
              <Tool $w={33}><ShapesIcon group /></Tool>
              <Tool $w={33}><FormIcon /></Tool>
              <Tool $w={33}><BubbleIcon mark="left" /></Tool>
              <Tool $w={33}><WidthIcon /></Tool>
              <Tool $w={33}><WidthIcon turn /></Tool>
              <Tool $w={33}><BubbleIcon mark="right" /></Tool>
              <Tool $w={33}><BubbleIcon mark="del" /></Tool>
              <Rule $c="#8d8077" $m={3} />
              <Tool $w={16}><svg width="11" height="10"><path d="M0 0h11v2H0zM0 4h11L5.500 10z" fill="#222" /></svg></Tool>
            </QuickBar>
            <Caption>Excel小白脱白系列课程.xlsx  -  Microsoft Excel</Caption>
            <WinButtons>
              <WinButton aria-label="最小化"><svg width="13" height="14"><path d="M0 9h13v3H0z" fill="#33271e" /></svg></WinButton>
              <WinButton aria-label="最大化"><svg width="16" height="13"><path d="M1 2h14v10H1z" fill="none" stroke="#33271e" strokeWidth="2" /><path d="M0 0h16v3H0z" fill="#33271e" /></svg></WinButton>
              <WinButton $close aria-label="关闭"><svg width="12" height="12"><path d="M1 1l10 10M11 1L1 11" stroke="#fff" strokeWidth="2.500" /></svg></WinButton>
            </WinButtons>
          </TitleBar>
          <TabRow>
            <FileTab>文件</FileTab>
            <Tab $on>开始</Tab>
            {["插入", "页面布局", "公式", "数据", "审阅", "视图", "开发工具"].map((t) => <Tab key={t}>{t}</Tab>)}
            <TabTools>
              <Tool $w={32}><svg width="14" height="12"><path d="M1 9l6-8 6 8-3 2-3-3-3 3z" fill="#fff" stroke="#555" strokeWidth="1.500" /></svg></Tool>
              <Tool $w={32}><HelpIcon /></Tool>
              <Tool><svg width="16" height="8"><rect x="1" y="1" width="14" height="5" rx="1" fill="#fff" stroke="#666" strokeWidth="1.500" /></svg></Tool>
              <Tool><svg width="18" height="18" fill="#fff" stroke="#555" strokeWidth="2"><path d="M6 2h11v9H6zM1 7h10v9H1zM4 10h4v3H4z" /></svg></Tool>
              <Tool><svg width="18" height="16"><path d="M3 2l12 12M15 2L3 14" stroke="#555" strokeWidth="6" /><path d="M3 2l12 12M15 2L3 14" stroke="#fff" strokeWidth="3" /></svg></Tool>
            </TabTools>
          </TabRow>
          <SiteMark aria-hidden="true"><span>搜狐</span><span>视频</span></SiteMark>
        </Chrome>

        <RibbonBar />

        <FormulaBar>
          <NameBox>
            <input aria-label="名称框" defaultValue="J4" />
            <Down c="#333" w={11} />
          </NameBox>
          <FxArea>
            <svg width="12" height="8"><path d="M1 5q5-6 10 0" fill="none" stroke="#b5b8be" strokeWidth="3" /></svg>
            <Glyph $italic $size={23}>fx</Glyph>
          </FxArea>
          <FormulaInput aria-label="编辑栏" />
          <Expand aria-label="展开"><svg width="12" height="8"><path d="M1 1l5 5 5-5" fill="none" stroke="#444" strokeWidth="2.500" /></svg></Expand>
        </FormulaBar>

        <SheetArea>
          <Worksheet />
          <VScroll>
            <SplitBox />
            <ArrowButton aria-label="向上"><Tri d="M0 9L6 3l6 6z" w={14} /></ArrowButton>
            <Thumb><svg width="10" height="10"><path d="M0 1h10M0 4h10M0 7h10" stroke="#888" /></svg></Thumb>
            <DownButton aria-label="向下"><Tri d="M0 3l6 6 6-6z" w={14} /></DownButton>
          </VScroll>
        </SheetArea>

        <BottomRow>
          <SheetTabs>
            <NavButtons>
              <Tri d="M1 1h2v10H1zM10 1v10L4 6z" w={10} />
              <Tri d="M9 1v10L3 6z" w={10} />
              <Tri d="M3 1v10l6-5z" w={10} />
              <Tri d="M9 1h2v10H9zM2 1v10l6-5z" w={10} />
            </NavButtons>
            {sheetTabs.map((t) => <SheetTab key={t} $on={t.startsWith("怎么")}>{t}</SheetTab>)}
          </SheetTabs>
          <ArrowButton aria-label="向左"><Tri d="M9 0v12L2 6z" h={14} /></ArrowButton>
          <Thumb $side><svg width="12" height="12"><path d="M1 0v12M4 0v12M7 0v12M10 0v12" stroke="#777" /></svg></Thumb>
          <RightButton aria-label="向右"><Tri d="M3 0v12l7-6z" h={14} /></RightButton>
          <SplitBox $side />
          <Rule $h={24} $m={11} $c="transparent" />
        </BottomRow>

        <StatusBar>
          就绪
          <Rule $h={25} $m={14} $c="#8f959c" />
          <MacroIcon />
          <Rule $h={25} $m={14} $c="#8f959c" />
          <Zoom>
            <Rule $h={25} $m={6} $c="#8f959c" />
            <Tool $w={28} $h={28} $on><svg width="18" height="16" fill="#fff" stroke="#555" strokeWidth="1.500"><path d="M1 1h16v14H1zM6 1v14M12 1v14M1 6h16M1 10h16" /></svg></Tool>
            <Tool $w={28}><svg width="20" height="18" fill="#d5d8dc" stroke="#555" strokeWidth="2"><path d="M1 1h18v16H1z" /><path d="M6 4h8v10H6z" fill="#fff" /></svg></Tool>
            <Tool $w={28}><svg width="20" height="18" fill="#b9bdc2" stroke="#555" strokeWidth="2"><path d="M1 1h18v16H1z" /><path d="M1 1h6v9H1zM7 1h6v9H7z" fill="#fff" /></svg></Tool>
            <label htmlFor="zoom">100%</label>
            <Tool $w={24}><svg width="24" height="24"><circle cx="12" cy="12" r="10" fill="#f4f5f6" stroke="#71767c" strokeWidth="2" /><path d="M7 12h10" stroke="#444" strokeWidth="3" /></svg></Tool>
            <input id="zoom" type="range" defaultValue="50" />
            <Tool $w={24}><svg width="24" height="24"><circle cx="12" cy="12" r="10" fill="#f4f5f6" stroke="#71767c" strokeWidth="2" /><path d="M7 12h10M12 7v10" stroke="#444" strokeWidth="3" /></svg></Tool>
            <svg width="26" height="26" fill="#8f959c"><path d="M20 12h3v3h-3zM20 18h3v3h-3zM14 18h3v3h-3zM20 23h3v3h-3zM14 23h3v3h-3zM8 23h3v3H8z" /></svg>
          </Zoom>
        </StatusBar>

        <Banner>Excel<b>学习</b>Excel<b>教程</b>QQ<b>群：</b>168690768</Banner>
      </Window>
    </>
  );
}
